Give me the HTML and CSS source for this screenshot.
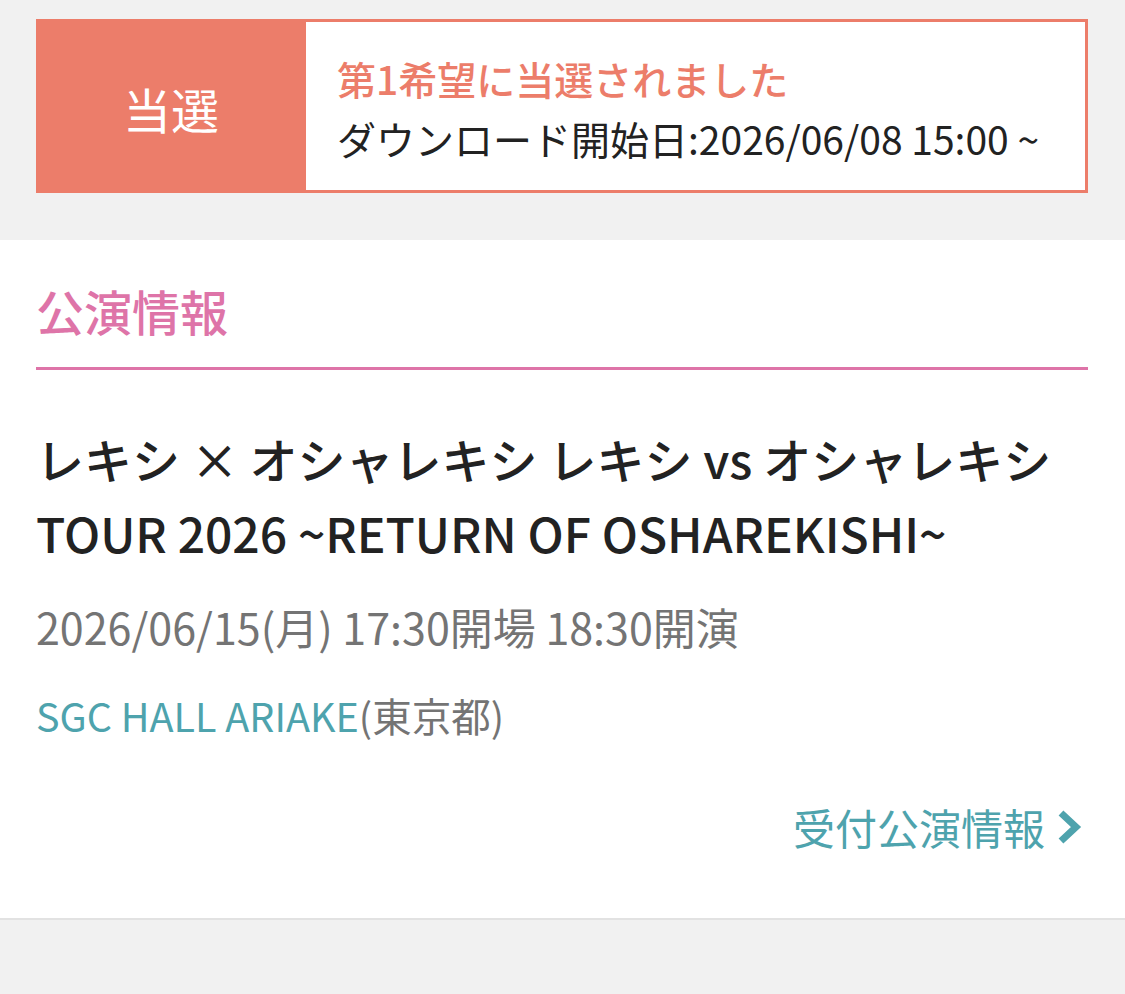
FILE: index.html
```html
<!DOCTYPE html>
<html lang="ja">
<head>
<meta charset="utf-8">
<title>公演情報</title>
<link rel="stylesheet" href="styles.css">
</head>
<body>
<div class="result">
  <div class="badge">当選</div>
  <div class="message">
    <p class="win">第1希望に当選されました</p>
    <p class="dl">ダウンロード開始日:2026/06/08 15:00 ~</p>
  </div>
</div>
<section class="card">
  <h2 class="heading">公演情報</h2>
  <h3 class="title">レキシ × オシャレキシ レキシ vs オシャレキシ<br>TOUR 2026 ~RETURN OF OSHAREKISHI~</h3>
  <p class="date">2026/06/15(月) 17:30開場 18:30開演</p>
  <p class="venue"><span class="venue-name">SGC HALL ARIAKE</span>(東京都)</p>
  <div class="more">
    <a class="more-link" href="#">受付公演情報<svg class="chev" width="26" height="36" viewBox="0 0 26 36"><polyline points="5,4 20,18 5,32" fill="none" stroke="currentColor" stroke-width="7"/></svg></a>
  </div>
</section>
</body>
</html>
```
FILE: styles.css
```css
* { box-sizing: border-box; }
html, body { margin: 0; padding: 0; }
body {
  background: #f1f1f1;
  font-family: "Noto Sans CJK JP", "Noto Sans", sans-serif;
  color: #222;
  height: 994px;
  overflow: hidden;
}
p, h2, h3 { margin: 0; }

.result {
  display: flex;
  margin: 19px 37px 0 36px;
  height: 174px;
}
.badge {
  width: 270px;
  background: #ec7d6a;
  color: #fff;
  font-size: 48px;
  display: flex;
  align-items: center;
  justify-content: center;
  padding-top: 4px;
}
.message {
  flex: 1;
  background: #fff;
  border: 3px solid #ec7d6a;
  border-left: none;
  padding: 26px 0 0 31px;
}
.win {
  color: #ec7d6a;
  font-size: 39px;
  line-height: 60px;
  font-weight: 500;
}
.dl {
  font-size: 39px;
  line-height: 60px;
}

.card {
  margin-top: 47px;
  background: #fff;
  padding: 0 37px 60px 36px;
  border-bottom: 2px solid #e2e2e2;
}
.heading {
  color: #de74a8;
  font-size: 48px;
  font-weight: 500;
  line-height: 72px;
  padding-top: 34px;
  padding-bottom: 21px;
  border-bottom: 3px solid #de74a8;
}
.title {
  margin-top: 51px;
  font-size: 48px;
  font-weight: 500;
  line-height: 74px;
  color: #222;
}
.date {
  margin-top: 26px;
  font-size: 43px;
  line-height: 63px;
  color: #747474;
}
.venue {
  margin-top: 25px;
  font-size: 39.5px;
  line-height: 63px;
  color: #747474;
}
.venue-name { color: #4ea3ad; }
.more {
  margin-top: 49px;
  display: flex;
  justify-content: flex-end;
}
.more-link {
  color: #4ea3ad;
  font-size: 42px;
  line-height: 63px;
  text-decoration: none;
  display: flex;
  align-items: center;
  gap: 11px;
  padding-right: 6px;
}
.chev { display: block; }
```
